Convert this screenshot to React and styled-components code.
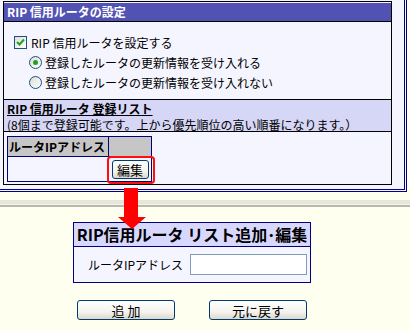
import React from "react";
import styled, { createGlobalStyle } from "styled-components";

const GlobalStyle = createGlobalStyle`
    body {
        margin: 0;
        background: #fffff0;
        font-family: "Noto Sans CJK JP", "DejaVu Sans", sans-serif;
        font-size: 12px;
        color: #000;
    }
`;

const Page = styled.div`
    position: relative;
    width: 410px;
    height: 331px;
    overflow: hidden;
`;

const Frame = styled.div`
    width: 389px;
    padding: 1px 12px 4px 3px;
    background: #f5f5ff;
    border-right: 3px double #000080;
    border-bottom: 3px double #000080;
`;

const SettingBox = styled.div`
    border: 1px solid #000;
    padding-top: 1px;
`;

const Header = styled.div`
    height: 18px;
    line-height: 18px;
    padding-left: 3px;
    background: #5252b4;
    color: #fff;
    font-weight: bold;
    border-bottom: 1px solid #000;
`;

const Options = styled.div`
    box-sizing: border-box;
    height: 77px;
    padding: 10px 0 0 10px;
`;

const OptionRow = styled.label`
    display: flex;
    align-items: center;
    gap: ${p => (p.$radio ? 3 : 4)}px;
    height: 20px;
    padding-left: ${p => (p.$radio ? 15 : 0)}px;
`;

const CheckBox = styled.span`
    box-sizing: border-box;
    display: inline-flex;
    align-items: center;
    justify-content: center;
    width: 13px;
    height: 13px;
    border: 1px solid #1c5180;
    background: linear-gradient(135deg, #dcdcd7, #ffffff);
`;

const Radio = styled.span`
    box-sizing: border-box;
    display: inline-flex;
    align-items: center;
    justify-content: center;
    width: 13px;
    height: 13px;
    border: 1px solid #1c5180;
    border-radius: 50%;
    background: linear-gradient(135deg, #dcdcd7, #ffffff);
    &::after {
        content: "";
        display: ${p => (p.$checked ? "block" : "none")};
        width: 5px;
        height: 5px;
        border-radius: 50%;
        background: #21a121;
    }
`;

const Band = styled.div`
    height: 33px;
    padding: 1px 3px 0;
    box-sizing: border-box;
    background: #d6d6f6;
    border-top: 1px solid #000;
    border-bottom: 1px solid #000;
    line-height: 16px;
`;

const BandTitle = styled.div`
    font-weight: bold;
    text-decoration: underline;
`;

const ListArea = styled.div`
    height: 52px;
    box-sizing: border-box;
    padding: 4px 0 0 3px;
`;

const RouterTable = styled.div`
    display: grid;
    grid-template-columns: 100px 42px;
    grid-template-rows: 19px 24px;
    gap: 1px;
    width: max-content;
    background: #000080;
    border: 1px solid #000080;
`;

const HeadCell = styled.div`
    background: #c6c6c6;
    font-weight: bold;
    line-height: 19px;
    padding-left: 1px;
    white-space: nowrap;
`;

const Cell = styled.div`
    background: #f5f5ff;
    display: flex;
    align-items: center;
    justify-content: center;
`;

const Marked = styled.span`
    position: relative;
    display: inline-flex;
`;

const Highlight = styled.span`
    position: absolute;
    left: -5px;
    top: -4px;
    width: 48px;
    height: 28px;
    box-sizing: border-box;
    border: 2px solid #ff1010;
    border-radius: 4px;
`;

const XpButton = styled.button`
    box-sizing: border-box;
    width: ${p => p.$w}px;
    height: ${p => p.$h}px;
    padding: 0;
    border: 1px solid #003c74;
    border-radius: 3px;
    background: linear-gradient(#ffffff, #f4f3ee 60%, #dcd8cc);
    font-family: inherit;
    font-size: ${p => p.$size}px;
    line-height: 1;
    color: #000;
    white-space: pre;
`;

const Divider = styled.div`
    height: 7px;
    margin-top: 8px;
    background: linear-gradient(
        #e6e6dc 0 4px,
        #f4f4e8 4px 5px,
        #b8b8b0 5px 7px
    );
`;

const Lower = styled.div`
    padding: 15px 0 0 73px;
`;

const Panel = styled.div`
    width: 238px;
    box-sizing: border-box;
    border: 1px solid #000080;
`;

const PanelHead = styled.div`
    height: 24px;
    line-height: 23px;
    box-sizing: border-box;
    background: #d8d8ff;
    border-bottom: 1px solid #000080;
    text-align: center;
    font-size: 16px;
    font-weight: bold;
    white-space: nowrap;
`;

const PanelBody = styled.div`
    height: 35px;
    display: flex;
    align-items: center;
    gap: 7px;
    padding-left: 14px;
    background: #f5f5ff;
`;

const TextInput = styled.input`
    box-sizing: border-box;
    width: 117px;
    height: 21px;
    border: 1px solid #7f9db9;
    background: #fff;
    padding: 0 2px;
`;

const Buttons = styled.div`
    width: 238px;
    display: flex;
    justify-content: center;
    gap: 34px;
    margin-top: 17px;
`;

const Arrow = styled.svg`
    position: absolute;
    left: 118px;
    top: 188px;
`;

const Check = () => (
    <svg width="9" height="9" viewBox="0 0 9 9">
        <path d="M1 4 L3.5 6.5 L8 1.5" fill="none" stroke="#21a121" strokeWidth="2" />
    </svg>
);

export default function App() {
    return (
        <Page>
            <GlobalStyle />
            <Frame>
                <SettingBox>
                    <Header>RIP 信用ルータの設定</Header>
                    <Options>
                        <OptionRow>
                            <CheckBox>
                                <Check />
                            </CheckBox>
                            RIP 信用ルータを設定する
                        </OptionRow>
                        <OptionRow $radio>
                            <Radio $checked />
                            登録したルータの更新情報を受け入れる
                        </OptionRow>
                        <OptionRow $radio>
                            <Radio />
                            登録したルータの更新情報を受け入れない
                        </OptionRow>
                    </Options>
                    <Band>
                        <BandTitle>RIP 信用ルータ 登録リスト</BandTitle>
                        <div>(8個まで登録可能です。上から優先順位の高い順番になります。）</div>
                    </Band>
                    <ListArea>
                        <RouterTable>
                            <HeadCell>ルータIPアドレス</HeadCell>
                            <HeadCell />
                            <Cell />
                            <Cell>
                                <Marked>
                                    <XpButton $w={37} $h={19} $size={13}>
                                        編集
                                    </XpButton>
                                    <Highlight />
                                </Marked>
                            </Cell>
                        </RouterTable>
                    </ListArea>
                </SettingBox>
            </Frame>
            <Divider />
            <Lower>
                <Panel>
                    <PanelHead>RIP信用ルータ リスト追加･編集</PanelHead>
                    <PanelBody>
                        ルータIPアドレス
                        <TextInput />
                    </PanelBody>
                </Panel>
                <Buttons>
                    <XpButton $w={98} $h={20} $size={13}>
                        追 加
                    </XpButton>
                    <XpButton $w={98} $h={20} $size={13}>
                        元に戻す
                    </XpButton>
                </Buttons>
            </Lower>
            <Arrow width="28" height="42" viewBox="0 0 28 42">
                <rect x="6" y="0" width="14" height="30" fill="#ff0000" />
                <polygon points="0,29 28,29 14,41" fill="#ff0000" />
            </Arrow>
        </Page>
    );
}
